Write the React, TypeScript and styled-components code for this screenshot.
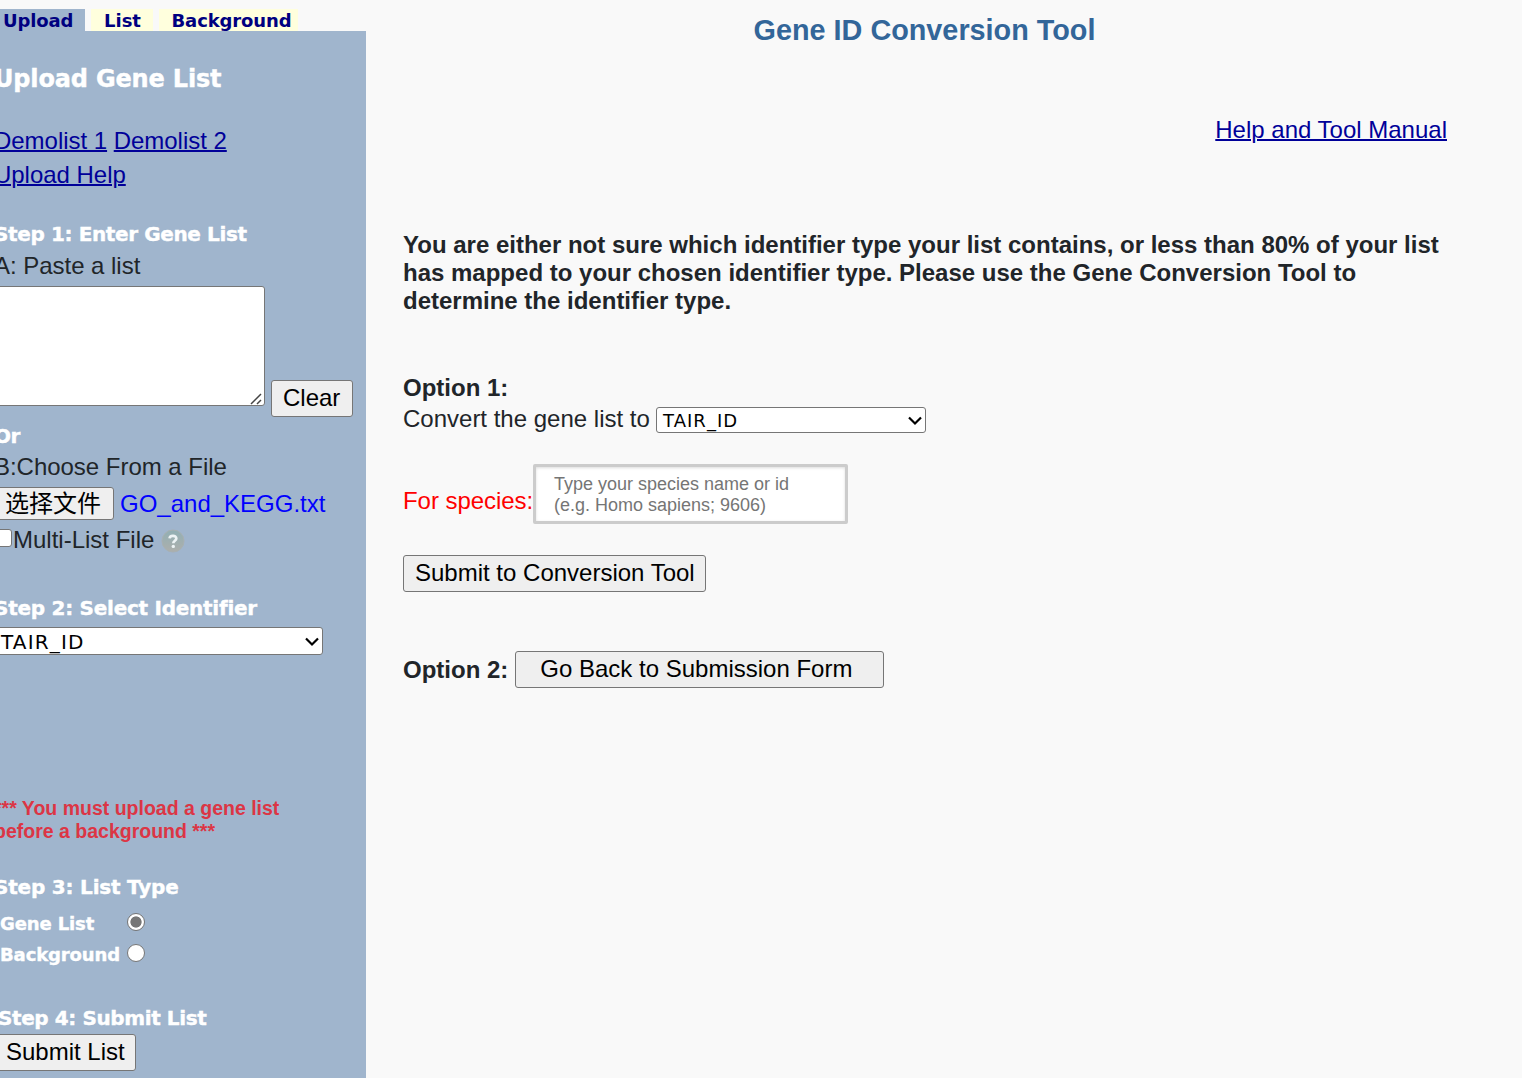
import React from "react";
import styled, { createGlobalStyle } from "styled-components";

const GlobalStyle = createGlobalStyle`
  * { box-sizing: border-box; }
  body {
    margin: 0;
    background: #f9f9f9;
    overflow: hidden;
    color: #212529;
    font-family: "Liberation Sans", Arial, "Noto Sans CJK SC", sans-serif;
    font-size: 24px;
  }
`;

const verdana = `"DejaVu Sans", Verdana, sans-serif`;

const Page = styled.div`
  display: flex;
  width: 1522px;
  height: 1078px;
  overflow: hidden;
`;

const Sidebar = styled.aside`
  width: 366px;
  flex: none;
  display: flex;
  flex-direction: column;
`;

const Tabs = styled.nav`
  display: flex;
  height: 22px;
  margin-top: 9px;
  gap: 6px;
`;

const Tab = styled.a<{ $active?: boolean; $width: number; $pad: number; $spacing?: number }>`
  width: ${(p) => p.$width}px;
  padding-left: ${(p) => p.$pad}px;
  background: ${(p) => (p.$active ? "#a0b5cd" : "#ffffdd")};
  color: #000080;
  font: bold 18px/23px ${verdana};
  letter-spacing: ${(p) => p.$spacing ?? 0}px;
  white-space: nowrap;
`;

const Panel = styled.div`
  flex: 1;
  overflow: hidden;
  background: #a0b5cd;
`;

const Form = styled.form`
  margin-left: -6px;
  padding-top: 32px;
  display: flex;
  flex-direction: column;
  align-items: flex-start;
  white-space: nowrap;
`;

const PanelTitle = styled.h2`
  margin: 0;
  color: #fff;
  font: bold 24px/32px ${verdana};
  letter-spacing: -0.17px;
  -webkit-text-stroke: 0.4px #fff;
`;

const Links = styled.div`
  margin-top: 29px;
  line-height: 34px;
  letter-spacing: -0.03px;
`;

const Link = styled.a`
  color: #000099;
  text-decoration: underline;
  text-decoration-thickness: 2px;
`;

const StepTitle = styled.h3<{ $top: number; $left?: number; $spacing?: number }>`
  margin: ${(p) => p.$top}px 0 0 ${(p) => p.$left ?? 0}px;
  color: #fff;
  font: bold 20px/28px ${verdana};
  letter-spacing: ${(p) => p.$spacing ?? 0}px;
  -webkit-text-stroke: 0.4px #fff;
`;

const Label = styled.div<{ $top: number }>`
  margin-top: ${(p) => p.$top}px;
  line-height: 30px;
  letter-spacing: -0.03px;
`;

const PasteRow = styled.div`
  display: flex;
  height: 131px;
  margin-top: 5px;
  gap: 6px;
`;

const GeneField = styled.div`
  position: relative;
  width: 271px;
  height: 120px;
`;

const GeneInput = styled.textarea`
  display: block;
  width: 100%;
  height: 100%;
  margin: 0;
  border: 1px solid #767676;
  border-radius: 3px;
  background: #fff;
  resize: none;
`;

const Grip = styled.svg`
  position: absolute;
  right: 2px;
  bottom: 1px;
  width: 13px;
  height: 13px;
`;

const Button = styled.button<{ $width: number; $top?: number; $pad?: number; $height?: number }>`
  width: ${(p) => p.$width}px;
  height: ${(p) => p.$height ?? 37}px;
  margin: ${(p) => p.$top ?? 0}px 0 0;
  padding: 0 0 2px ${(p) => p.$pad ?? 11}px;
  border: 1px solid #767676;
  border-radius: 3px;
  background: #efefef;
  color: #000;
  font: inherit;
  line-height: 31px;
  text-align: left;
  white-space: nowrap;
`;

const FileRow = styled.div`
  display: flex;
  align-items: center;
  gap: 6px;
  height: 33px;
  margin-top: 5px;
  color: #0000ff;
`;

const MultiRow = styled.label`
  display: flex;
  align-items: center;
  height: 30px;
  margin-top: 5px;
`;

const Checkbox = styled.span`
  width: 18px;
  height: 18px;
  margin: 0 1px 4px 0;
  border: 1px solid #767676;
  border-radius: 3px;
  background: #fff;
`;

const HelpIcon = styled.svg`
  width: 24px;
  height: 24px;
  margin: 2px 0 0 7px;
`;

const Select = styled.div<{ $width: number; $height: number; $size: number; $spacing?: number }>`
  display: flex;
  align-items: center;
  justify-content: space-between;
  width: ${(p) => p.$width}px;
  height: ${(p) => p.$height}px;
  padding: 1px 3px 0 6px;
  border: 1px solid #767676;
  border-radius: 3px;
  background: #fff;
  color: #000;
  font: ${(p) => p.$size}px/1.2 ${verdana};
  letter-spacing: ${(p) => p.$spacing ?? 0}px;
`;

const Arrow = styled.svg`
  width: 14px;
  height: 10px;
`;

const SelectSlot = styled.div`
  margin-top: 5px;
`;

const Warning = styled.p`
  margin: 142px 0 0;
  color: #dc3545;
  font-weight: bold;
  font-size: 19.5px;
  line-height: 23px;
`;

const RadioGroup = styled.div`
  display: grid;
  grid-template-columns: 127px auto;
  grid-auto-rows: 31px;
  align-items: center;
  margin: 7px 0 0 6px;
`;

const RadioLabel = styled.span`
  color: #fff;
  font: bold 18px/31px ${verdana};
  letter-spacing: -0.12px;
  -webkit-text-stroke: 0.4px #fff;
`;

const Radio = styled.span<{ $checked?: boolean }>`
  width: 18px;
  height: 18px;
  margin-bottom: 3px;
  border: 1.5px solid #767676;
  border-radius: 50%;
  background: ${(p) => (p.$checked ? "radial-gradient(circle, #767676 5.2px, #fff 6px)" : "#fff")};
`;

const Main = styled.main`
  flex: 1;
  padding-left: 37px;
  display: flex;
  flex-direction: column;
  align-items: flex-start;
  white-space: nowrap;
`;

const PageTitle = styled.h1`
  align-self: stretch;
  margin: 12px 76px 0 0;
  color: #336699;
  font-size: 28.8px;
  line-height: 36px;
  text-align: center;
`;

const ManualLine = styled.div`
  align-self: flex-end;
  margin: 67px 75px 0 0;
  line-height: 30px;
`;

const Notice = styled.p`
  margin: 86px 0 0;
  font-weight: bold;
  line-height: 28px;
`;

const OptionTitle = styled.strong`
  line-height: 30px;
`;

const OptionOne = styled.section`
  margin-top: 58px;
  display: flex;
  flex-direction: column;
`;

const ConvertRow = styled.div`
  display: flex;
  align-items: flex-start;
  gap: 6px;
  height: 30px;
  margin-top: 1px;
`;

const ConvertLabel = styled.span`
  width: 247px;
  line-height: 30px;
`;

const ConvertSelect = styled(Select)`
  margin-top: 3px;
`;

const SpeciesRow = styled.div`
  display: flex;
  align-items: center;
  height: 60px;
  margin-top: 30px;
`;

const SpeciesLabel = styled.span`
  width: 130px;
  padding-top: 13px;
  color: #ff0000;
  letter-spacing: -0.05px;
`;

const SpeciesInput = styled.textarea`
  width: 315px;
  height: 60px;
  margin: 0;
  padding: 7px 18px;
  border: 3px solid #ccc;
  border-radius: 2px;
  background: #fff;
  box-shadow: inset 0 1px 3px #ddd;
  font: 18px/21px "Liberation Sans", Arial, sans-serif;
  overflow: hidden;
  resize: none;
  &::placeholder { color: #757575; }
`;

const OptionTwo = styled.section`
  display: flex;
  align-items: center;
  margin-top: 59px;
  gap: 7px;
`;

const Chevron = () => (
  <Arrow viewBox="0 0 14 10">
    <path d="M1 1.5 7 7.5 13 1.5" fill="none" stroke="#000" strokeWidth="2.2" />
  </Arrow>
);

export default function App() {
  return (
    <>
      <GlobalStyle />
      <Page>
        <Sidebar>
          <Tabs>
            <Tab $active $width={85} $pad={3} $spacing={-0.15}>Upload</Tab>
            <Tab $width={62} $pad={13}>List</Tab>
            <Tab $width={139} $pad={12.5} $spacing={-0.12}>Background</Tab>
          </Tabs>
          <Panel>
            <Form>
              <PanelTitle>Upload Gene List</PanelTitle>
              <Links>
                <Link>Demolist 1</Link> <Link>Demolist 2</Link>
                <br />
                <Link>Upload Help</Link>
              </Links>
              <StepTitle $top={28} $spacing={-0.38}>Step 1: Enter Gene List</StepTitle>
              <Label $top={3}>A: Paste a list</Label>
              <PasteRow>
                <GeneField>
                  <GeneInput />
                  <Grip viewBox="0 0 13 13">
                    <path d="M1 12 11 2M7 12 11 8" fill="none" stroke="#444" strokeWidth="1.5" />
                  </Grip>
                </GeneField>
                <Button type="button" $width={82} $top={94}>Clear</Button>
              </PasteRow>
              <StepTitle $top={5} $spacing={-0.4}>Or</StepTitle>
              <Label $top={2}>B:Choose From a File</Label>
              <FileRow>
                <Button type="button" $width={120} $height={33} $pad={10}>选择文件</Button>
                <span>GO_and_KEGG.txt</span>
              </FileRow>
              <MultiRow>
                <Checkbox />
                Multi-List File
                <HelpIcon viewBox="0 0 24 24">
                  <defs>
                    <linearGradient id="help" x1="0" y1="0" x2="0" y2="1">
                      <stop offset="0" stopColor="#91afb4" />
                      <stop offset="1" stopColor="#adafac" />
                    </linearGradient>
                  </defs>
                  <circle cx="12" cy="12" r="11" fill="url(#help)" stroke="#a8b0b2" />
                  <path d="M8.6 9.4C8.8 5.8 15.5 6 15.3 9.6c-.1 2.2-3 2.2-3 4.7" fill="none" stroke="#edf3f5" strokeWidth="2.7" />
                  <circle cx="12.3" cy="17.4" r="1.7" fill="#edf3f5" />
                </HelpIcon>
              </MultiRow>
              <StepTitle $top={39} $spacing={-0.26}>Step 2: Select Identifier</StepTitle>
              <SelectSlot>
                <Select $width={329} $height={28} $size={20} $spacing={1.15}>TAIR_ID<Chevron /></Select>
              </SelectSlot>
              <Warning>
                *** You must upload a gene list
                <br />
                before a background ***
              </Warning>
              <StepTitle $top={30} $spacing={-0.2}>Step 3: List Type</StepTitle>
              <RadioGroup>
                <RadioLabel>Gene List</RadioLabel>
                <Radio $checked />
                <RadioLabel>Background</RadioLabel>
                <Radio />
              </RadioGroup>
              <StepTitle $top={34} $left={4} $spacing={-0.4}>Step 4: Submit List</StepTitle>
              <Button type="button" $width={142} $top={2}>Submit List</Button>
            </Form>
          </Panel>
        </Sidebar>
        <Main>
          <PageTitle>Gene ID Conversion Tool</PageTitle>
          <ManualLine><Link>Help and Tool Manual</Link></ManualLine>
          <Notice>
            You are either not sure which identifier type your list contains, or less than 80% of your list
            <br />
            has mapped to your chosen identifier type. Please use the Gene Conversion Tool to
            <br />
            determine the identifier type.
          </Notice>
          <OptionOne>
            <OptionTitle>Option 1:</OptionTitle>
            <ConvertRow>
              <ConvertLabel>Convert the gene list to</ConvertLabel>
              <ConvertSelect $width={270} $height={26} $size={18} $spacing={1.05}>TAIR_ID<Chevron /></ConvertSelect>
            </ConvertRow>
            <SpeciesRow>
              <SpeciesLabel>For species:</SpeciesLabel>
              <SpeciesInput placeholder={"Type your species name or id\n(e.g. Homo sapiens; 9606)"} />
            </SpeciesRow>
            <Button type="button" $width={303} $top={31}>Submit to Conversion Tool</Button>
          </OptionOne>
          <OptionTwo>
            <OptionTitle>Option 2:</OptionTitle>
            <Button type="button" $width={369} $pad={24}>Go Back to Submission Form</Button>
          </OptionTwo>
        </Main>
      </Page>
    </>
  );
}
